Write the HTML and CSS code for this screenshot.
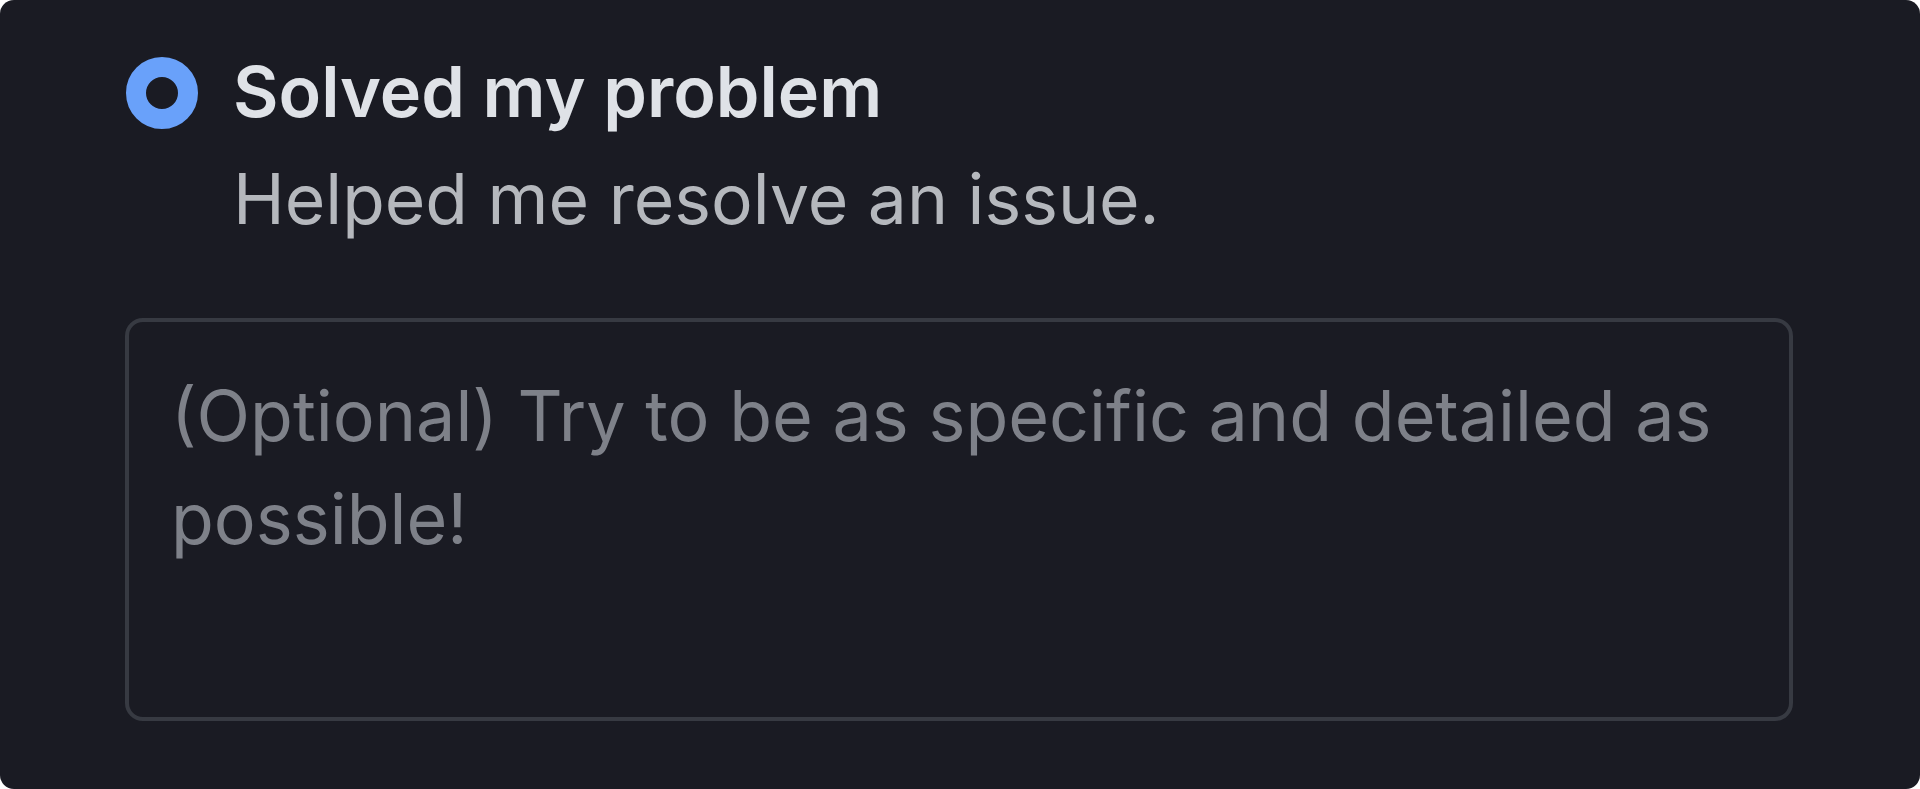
FILE: index.html
```html
<!DOCTYPE html>
<html lang="en">
<head>
<meta charset="utf-8">
<title>Feedback</title>
<link rel="stylesheet" href="styles.css">
</head>
<body>
<div class="card">
  <label class="option">
    <span class="radio"></span>
    <span class="option-text">
      <span class="option-title">Solved my problem</span>
      <span class="option-desc">Helped me resolve an issue.</span>
    </span>
  </label>
  <textarea class="comment" placeholder="(Optional) Try to be as specific and detailed as possible!"></textarea>
</div>
</body>
</html>
```

FILE: styles.css
```css
html, body {
  margin: 0;
  padding: 0;
  background: #ffffff;
}

body {
  font-family: Inter, "Noto Sans", sans-serif;
}

.card {
  box-sizing: border-box;
  width: 1920px;
  height: 789px;
  background: #1a1b23;
  border-radius: 14px;
  padding: 39px 127px 0 125px;
  display: flex;
  flex-direction: column;
}

.option {
  display: flex;
  align-items: flex-start;
  gap: 35px;
  padding-left: 1px;
}

.radio {
  flex: none;
  box-sizing: border-box;
  width: 72px;
  height: 72px;
  margin-top: 18px;
  border-radius: 50%;
  border: 20px solid #69a1fa;
  background: #1a1b23;
}

.option-text {
  display: flex;
  flex-direction: column;
}

.option-title {
  font-size: 70px;
  line-height: 105px;
  font-weight: 600;
  color: #dfe2e7;
}

.option-desc {
  margin-top: 3px;
  font-size: 69.6px;
  line-height: 105px;
  font-weight: 400;
  color: #b5b8bd;
}

.comment {
  box-sizing: border-box;
  margin-top: 66px;
  width: 1668px;
  height: 403px;
  padding: 42px 40px 42px 42px;
  border: 4px solid #373a42;
  border-radius: 18px;
  background: #1a1b23;
  color: #dfe2e7;
  font-family: Inter, "Noto Sans", sans-serif;
  font-size: 70px;
  line-height: 103px;
  resize: none;
  overflow: hidden;
  outline: none;
}

.comment::placeholder {
  color: #7e8189;
  opacity: 1;
}
```
